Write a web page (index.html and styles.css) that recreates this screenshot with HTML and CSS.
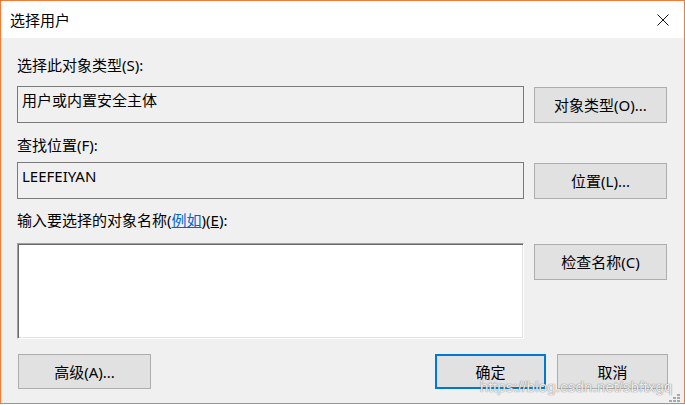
FILE: index.html
```html
<!DOCTYPE html>
<html lang="zh-CN">
<head>
<meta charset="utf-8">
<title>选择用户</title>
<link rel="stylesheet" href="styles.css">
</head>
<body>
<div class="window">
  <div class="titlebar">
    <span class="title">选择用户</span>
    <span class="close" aria-label="关闭">
      <svg width="12" height="12" viewBox="0 0 12 12"><path d="M0.5 0.5 L11.5 11.5 M11.5 0.5 L0.5 11.5" stroke="#111" stroke-width="1" fill="none"/></svg>
    </span>
  </div>
  <div class="content">
    <div class="label l1">选择此对象类型(S):</div>
    <div class="row r1">
      <div class="field">用户或内置安全主体</div>
      <button class="btn">对象类型(O)...</button>
    </div>
    <div class="label l2">查找位置(F):</div>
    <div class="row r2">
      <div class="field">LEEFEIYAN</div>
      <button class="btn">位置(L)...</button>
    </div>
    <div class="label l3">输入要选择的对象名称(<a class="link">例如</a>)(<u>E</u>):</div>
    <div class="row r3">
      <div class="textarea"></div>
      <button class="btn btn-top">检查名称(C)</button>
    </div>
    <div class="footer">
      <button class="btn btn-adv">高级(A)...</button>
      <div class="footer-right">
        <button class="btn btn-ok">确定</button>
        <button class="btn btn-cancel">取消</button>
      </div>
    </div>
  </div>
  <div class="watermark">https://blog.csdn.net/sbftxgq</div>
  <svg class="grip" width="11" height="8" viewBox="0 0 11 8">
    <rect x="8" y="0" width="3" height="2" fill="#a8a8a8"/>
    <rect x="4" y="3" width="3" height="2" fill="#a8a8a8"/>
    <rect x="8" y="3" width="3" height="2" fill="#a8a8a8"/>
    <rect x="0" y="6" width="3" height="2" fill="#a8a8a8"/>
    <rect x="4" y="6" width="3" height="2" fill="#a8a8a8"/>
    <rect x="8" y="6" width="3" height="2" fill="#a8a8a8"/>
  </svg>
</div>
</body>
</html>
```

FILE: styles.css
```css
html, body {
  margin: 0;
  padding: 0;
  background: #ffffff;
}
body {
  width: 685px;
  height: 405px;
  overflow: hidden;
  font-family: "Noto Sans", "Noto Sans CJK SC", sans-serif;
  font-size: 15px;
  color: #000;
}
.window {
  position: relative;
  box-sizing: border-box;
  width: 685px;
  height: 404px;
  border: 1px solid #f47a35;
  background: #f0f0f0;
  display: flex;
  flex-direction: column;
}
.titlebar {
  height: 37px;
  background: #ffffff;
  display: flex;
  align-items: center;
  justify-content: space-between;
  padding: 0 15px 0 9px;
  flex: none;
}
.title {
  line-height: 20px;
}
.close {
  display: flex;
  width: 12px;
  height: 12px;
  margin-top: 1px;
}
.content {
  padding: 17px 16px 0 16px;
  display: flex;
  flex-direction: column;
}
.label {
  line-height: 20px;
  height: 20px;
  white-space: nowrap;
}
.l1 { margin-bottom: 11px; }
.l2 { margin-top: 12px; margin-bottom: 7px; }
.l3 { margin-top: 11px; margin-bottom: 13px; }
.link {
  color: #0066cc;
  text-decoration: underline;
}
.row {
  display: grid;
  grid-template-columns: 507px 133px;
  column-gap: 10px;
  align-items: center;
}
.field {
  box-sizing: border-box;
  height: 37px;
  border: 1px solid #7a7a7a;
  background: #f0f0f0;
  padding: 3px 4px 0 4px;
  line-height: 20px;
}
.btn {
  box-sizing: border-box;
  height: 36px;
  border: 1px solid #adadad;
  background: #e1e1e1;
  font: inherit;
  color: #000;
  padding: 0;
  margin: 0;
  line-height: 20px;
  text-align: center;
}
.r3 { align-items: start; }
.textarea {
  box-sizing: border-box;
  height: 96px;
  background: #fff;
  border-top: 1px solid #a0a0a0;
  border-left: 1px solid #a0a0a0;
  border-right: 1px solid #fff;
  border-bottom: 1px solid #fff;
  box-shadow: inset 1px 1px 0 #696969, inset -1px -1px 0 #e3e3e3;
}
.btn-top { margin-top: 1px; }
.footer {
  margin-top: 15px;
  display: flex;
  justify-content: space-between;
  padding-left: 1px;
}
.btn-adv { width: 133px; height: 35px; }
.footer-right {
  display: flex;
  gap: 11px;
}
.btn-ok {
  width: 111px;
  height: 35px;
  border: 2px solid #0078d7;
}
.btn-cancel {
  width: 111px;
  height: 35px;
}
.watermark {
  position: absolute;
  left: 479px;
  top: 376px;
  font-family: "Liberation Sans", sans-serif;
  font-size: 15px;
  line-height: 20px;
  color: rgba(255, 255, 255, 0.9);
  text-shadow: 0 0 1px rgba(90, 90, 90, 0.8), 0 0 1px rgba(90, 90, 90, 0.5);
  letter-spacing: 0.2px;
  white-space: nowrap;
}
.grip {
  position: absolute;
  right: 4px;
  bottom: 1px;
}
```
